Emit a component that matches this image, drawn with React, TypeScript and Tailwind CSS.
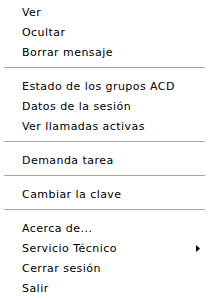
import React from "react";

type Item = { label: string; sub?: boolean } | "sep";

const items: Item[] = [
  { label: "Ver" },
  { label: "Ocultar" },
  { label: "Borrar mensaje" },
  "sep",
  { label: "Estado de los grupos ACD" },
  { label: "Datos de la sesión" },
  { label: "Ver llamadas activas" },
  "sep",
  { label: "Demanda tarea" },
  "sep",
  { label: "Cambiar la clave" },
  "sep",
  { label: "Acerca de..." },
  { label: "Servicio Técnico", sub: true },
  { label: "Cerrar sesión" },
  { label: "Salir" },
];

export default function App() {
  return (
    <div
      className="w-[210px] h-[300px] bg-white text-black pt-[2px] overflow-hidden"
      style={{ fontFamily: '"DejaVu Sans", Verdana, sans-serif' }}
    >
      {items.map((it, i) =>
        it === "sep" ? (
          <div key={i} className="h-[14px] pt-[5px] pl-[4px] pr-[5px]">
            <div className="h-px w-full bg-[#aca899]" />
          </div>
        ) : (
          <div
            key={i}
            className="h-[20px] flex items-center pl-[22px] pr-[10px] text-[11px] leading-none tracking-[0.45px]"
          >
            <span className="flex-1">{it.label}</span>
            {it.sub && (
              <svg width="4" height="7" viewBox="0 0 4 7">
                <path d="M0 0 L4 3.5 L0 7 Z" fill="#000" />
              </svg>
            )}
          </div>
        )
      )}
    </div>
  );
}
